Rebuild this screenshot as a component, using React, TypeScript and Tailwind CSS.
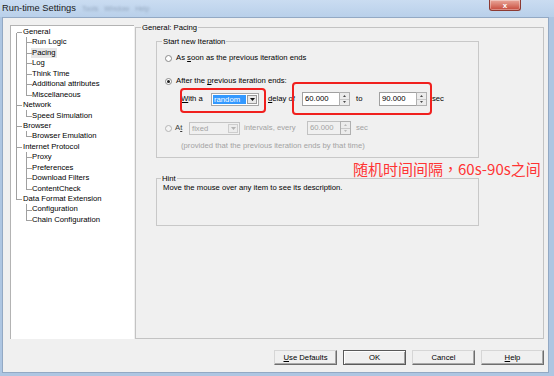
import type { ReactNode } from 'react';

type TreeItem = { label: string; level: 0 | 1; selected?: boolean };

const TREE: TreeItem[] = [
  { label: 'General', level: 0 },
  { label: 'Run Logic', level: 1 },
  { label: 'Pacing', level: 1, selected: true },
  { label: 'Log', level: 1 },
  { label: 'Think Time', level: 1 },
  { label: 'Additional attributes', level: 1 },
  { label: 'Miscellaneous', level: 1 },
  { label: 'Network', level: 0 },
  { label: 'Speed Simulation', level: 1 },
  { label: 'Browser', level: 0 },
  { label: 'Browser Emulation', level: 1 },
  { label: 'Internet Protocol', level: 0 },
  { label: 'Proxy', level: 1 },
  { label: 'Preferences', level: 1 },
  { label: 'Download Filters', level: 1 },
  { label: 'ContentCheck', level: 1 },
  { label: 'Data Format Extension', level: 0 },
  { label: 'Configuration', level: 1 },
  { label: 'Chain Configuration', level: 1 },
];

const ROW = 10.44;
const TOP = 0.8;
const cy = (i: number) => Math.round(TOP + i * ROW + ROW / 2) + 0.5;

function TreeLines() {
  const roots = TREE.map((t, i) => (t.level === 0 ? i : -1)).filter((i) => i >= 0);
  const lastRoot = roots[roots.length - 1];
  const lines: ReactNode[] = [];
  lines.push(<line key="v0" x1={5.5} y1={cy(0)} x2={5.5} y2={cy(lastRoot)} />);
  roots.forEach((r, k) => {
    lines.push(<line key={`h${r}`} x1={5.5} y1={cy(r)} x2={11} y2={cy(r)} />);
    const end = k < roots.length - 1 ? roots[k + 1] : TREE.length;
    if (end - r > 1) {
      lines.push(<line key={`v${r}`} x1={15.5} y1={cy(r) + 4} x2={15.5} y2={cy(end - 1)} />);
      for (let c = r + 1; c < end; c++) {
        lines.push(<line key={`c${c}`} x1={15.5} y1={cy(c)} x2={21} y2={cy(c)} />);
      }
    }
  });
  return (
    <svg className="pointer-events-none absolute inset-0" width="123" height="313" stroke="#a0a0a0" strokeWidth="1" shapeRendering="crispEdges">
      {lines}
    </svg>
  );
}

function Radio({ checked, disabled }: { checked?: boolean; disabled?: boolean }) {
  return (
    <span
      className={`flex h-[7px] w-[7px] shrink-0 items-center justify-center rounded-full border ${
        disabled ? 'border-[#b5b5b5] bg-[#f4f4f4]' : 'border-[#8a8a8a] bg-white'
      }`}
    >
      {checked ? <span className="h-[3px] w-[3px] rounded-full bg-[#1f1f1f]" /> : null}
    </span>
  );
}

function Spin({ disabled }: { disabled?: boolean }) {
  const c = disabled ? '#b9b9b9' : '#4a4a4a';
  return (
    <div className="flex h-[14px] w-[11px] shrink-0 flex-col border border-[#b0b0b0] bg-[#ececec]">
      <div className="flex flex-1 items-center justify-center border-b border-[#c9c9c9]">
        <svg width="3" height="2">
          <path d="M0 2L1.5 0L3 2Z" fill={c} />
        </svg>
      </div>
      <div className="flex flex-1 items-center justify-center">
        <svg width="3" height="2">
          <path d="M0 0L1.5 2L3 0Z" fill={c} />
        </svg>
      </div>
    </div>
  );
}

function NumberBox({ value, width, disabled }: { value: string; width: string; disabled?: boolean }) {
  return (
    <div className="flex h-[14px]">
      <div
        className={`${width} flex h-[14px] items-center border border-r-0 pl-[2px] ${
          disabled ? 'border-[#c2c2c2] bg-[#f0f0f0] text-[#a3a3a3]' : 'border-[#a0a0a0] bg-white text-black'
        }`}
      >
        {value}
      </div>
      <Spin disabled={disabled} />
    </div>
  );
}

function Button({ children, primary }: { children: ReactNode; primary?: boolean }) {
  return (
    <div
      className={`flex h-[15px] w-[63px] items-center justify-center border bg-[#f0f0f0] text-black ${
        primary
          ? 'border-[#5a5a5a] shadow-[inset_1px_1px_0_#ffffff,inset_-1px_-1px_0_#a0a0a0]'
          : 'border-[#d6d6d6] border-r-[#6e6e6e] border-b-[#6e6e6e] shadow-[inset_-1px_-1px_0_#a9a9a9]'
      }`}
    >
      {children}
    </div>
  );
}

export default function App() {
  return (
    <div className="relative flex h-[376px] w-[554px] flex-col overflow-hidden bg-[#aec6e2] font-['Liberation_Sans',Arial,sans-serif] text-[7.7px] text-black">
      {/* title bar */}
      <div className="flex h-[17px] shrink-0 items-start bg-linear-to-b from-[#cadcf1] to-[#b9d0ea]">
        <span className="mt-[2px] pl-[2px] text-[9.3px] leading-[12px] text-[#1a1a1a]">Run-time Settings</span>
        <div className="mt-[4px] ml-[6px] flex gap-[6px] text-[7px] leading-[10px] text-[#51627a] opacity-40 blur-[1px]">
          <span>Tools</span>
          <span>Window</span>
          <span>Help</span>
        </div>
        <div className="mr-[33px] ml-auto flex h-[11px] w-[32px] items-center justify-center rounded-b-[3px] border border-t-0 border-[#8c3a32] bg-linear-to-b from-[#e9a89c] to-[#c5473a] shadow-[inset_0_0_0_1px_rgba(255,255,255,0.35)]">
          <span className="text-[8px] leading-[9px] font-bold text-white">x</span>
        </div>
      </div>

      {/* client */}
      <div className="mr-[5px] mb-[3px] ml-[2px] flex flex-1 flex-col border border-[#93a9c4] bg-[#f0f0f0]">
        <div className="mt-[7px] ml-[7px] flex items-start">
          {/* tree */}
          <div className="relative h-[314px] w-[124px] border-t border-l border-[#b3b3b3] bg-white">
            <TreeLines />
            <div className="pt-[0.8px]">
              {TREE.map((t) => (
                <div
                  key={t.label}
                  className={`flex h-[10.44px] items-center leading-[10px] ${t.level === 0 ? 'pl-[11px]' : 'pl-[20px]'}`}
                >
                  <span className={`px-[1px] ${t.selected ? 'bg-[#e6e6e6]' : ''}`}>{t.label}</span>
                </div>
              ))}
            </div>
          </div>

          {/* right panel */}
          <div className="relative mt-[2px] ml-[1px] h-[312px] w-[409px] border border-[#c3c3c3]">
            <span className="absolute -top-[6px] left-[5px] bg-[#f0f0f0] px-[1px] leading-[11px]">General: Pacing</span>

            <div className="relative mt-[13px] ml-[20px] h-[117px] w-[323px] border border-[#c8c8c8]">
              <span className="absolute -top-[6px] left-[5px] bg-[#f0f0f0] px-[1px] leading-[11px]">Start new Iteration</span>

              <div className="mt-[10px] flex h-[12px] items-center pl-[8px]">
                <Radio />
                <span className="ml-[4px]">
                  As <u>s</u>oon as the previous iteration ends
                </span>
              </div>

              <div className="mt-[11px] flex h-[12px] items-center pl-[8px]">
                <Radio checked />
                <span className="ml-[4px]">
                  After the <u>p</u>revious iteration ends:
                </span>
              </div>

              <div className="mt-[5px] flex h-[14px] items-center pl-[24px]">
                <span className="w-[30px]">
                  <u>W</u>ith a
                </span>
                <div className="flex h-[13px] w-[48px] border border-[#a7a7a7] bg-white p-[1px]">
                  <span className="flex flex-1 items-center bg-[#3399ff] pl-[1px] leading-[9px] text-white">random</span>
                  <span className="ml-[1px] flex w-[10px] items-center justify-center border border-[#9a9a9a] bg-[#e9e9e9]">
                    <svg width="5" height="3">
                      <path d="M0 0H5L2.5 3Z" fill="#111" />
                    </svg>
                  </span>
                </div>
                <span className="ml-[9px] w-[34px]">
                  <u>d</u>elay of
                </span>
                <NumberBox value="60.000" width="w-[37px]" />
                <span className="w-[29px] pl-[6px]">to</span>
                <NumberBox value="90.000" width="w-[37px]" />
                <span className="ml-[5px]">sec</span>
              </div>

              <div className="mt-[15px] flex h-[14px] items-center pl-[8px] text-[#a3a3a3]">
                <Radio disabled />
                <span className="ml-[3px] w-[14px] text-[#3a3a3a]">
                  A<u>t</u>
                </span>
                <div className="flex h-[13px] w-[51px] border border-[#c4c4c4] bg-[#f0f0f0] p-[1px]">
                  <span className="flex flex-1 items-center pl-[1px] leading-[9px]">fixed</span>
                  <span className="flex w-[10px] items-center justify-center border border-[#cdcdcd] bg-[#ececec]">
                    <svg width="5" height="3">
                      <path d="M0 0H5L2.5 3Z" fill="#b3b3b3" />
                    </svg>
                  </span>
                </div>
                <span className="ml-[4px] w-[63px]">intervals, every</span>
                <NumberBox value="60.000" width="w-[33px]" disabled />
                <span className="ml-[5px]">sec</span>
              </div>

              <div className="mt-[5px] flex h-[12px] items-center pl-[24px] text-[#a3a3a3]">
                (provided that the previous iteration ends by that time)
              </div>
            </div>

            <div className="relative mt-[20px] ml-[20px] h-[48px] w-[323px] border border-[#c8c8c8]">
              <span className="absolute -top-[6px] left-[4px] bg-[#f0f0f0] px-[1px] leading-[11px]">Hint</span>
              <div className="mt-[3px] flex h-[12px] items-center pl-[6px]">
                Move the mouse over any item to see its description.
              </div>
            </div>
          </div>
        </div>

        {/* buttons */}
        <div className="mt-[11px] flex justify-end gap-[6px] pr-[4px]">
          <Button>
            <span>
              <u>U</u>se Defaults
            </span>
          </Button>
          <Button primary>OK</Button>
          <Button>Cancel</Button>
          <Button>
            <span>
              <u>H</u>elp
            </span>
          </Button>
        </div>
      </div>

      {/* annotations */}
      <div className="pointer-events-none absolute top-[88px] left-[180px] h-[25px] w-[86px] rounded-[4px] border-2 border-[#f0201e]" />
      <div className="pointer-events-none absolute top-[82px] left-[292px] h-[33px] w-[140px] rounded-[4px] border-2 border-[#f0201e]" />
      <span className="pointer-events-none absolute top-[159px] left-[353px] font-['Noto_Sans_CJK_SC',sans-serif] text-[15px] leading-[20px] whitespace-nowrap text-[#ff3434]">
        随机时间间隔<span className="font-['Noto_Sans_CJK_TC',sans-serif]">，</span>60s-90s之间
      </span>
    </div>
  );
}
